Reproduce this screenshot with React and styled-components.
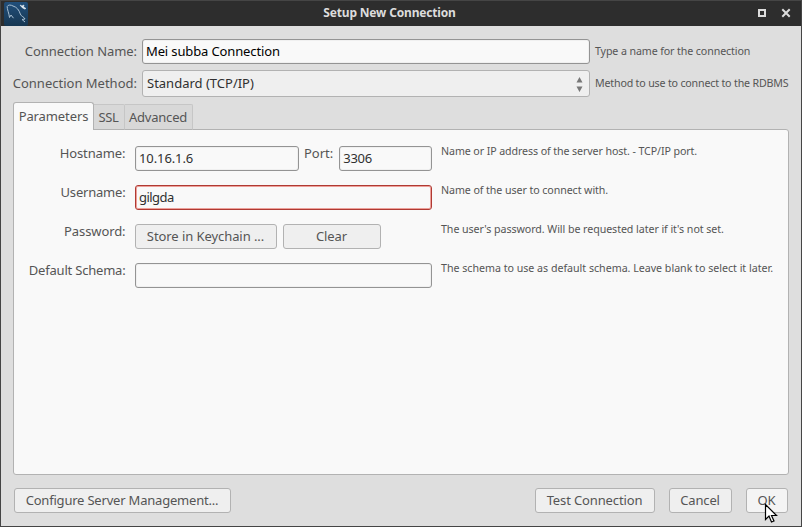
import React from "react";
import styled, { createGlobalStyle, css } from "styled-components";

const GlobalStyle = createGlobalStyle`
  * { box-sizing: border-box; }
  body { margin: 0; overflow: hidden; }
  button, input { font: inherit; }
`;

const Dialog = styled.div`
  display: flex;
  flex-direction: column;
  width: 802px;
  height: 527px;
  border: 1px solid #454545;
  background: #dedede;
  color: #555;
  font: 13px/18px "Noto Sans", "Open Sans", sans-serif;
  white-space: nowrap;
  cursor: default;
`;

const TitleBar = styled.header`
  display: grid;
  grid-template-columns: 60px 1fr 60px;
  align-items: center;
  height: 25px;
  flex: none;
  background: #2d2d2d;
  color: #dcdcdc;
`;

const AppIcon = styled.svg`
  display: block;
  margin-left: 3px;
`;

const Title = styled.h1`
  margin: 0 0 1px -24px;
  padding-left: 5px;
  width: 700px;
  font-size: 12px;
  line-height: 18px;
  font-weight: 700;
  text-align: center;
  letter-spacing: -0.17px;
`;

const WindowControls = styled.svg`
  display: block;
  justify-self: end;
  margin: 0 9px 1px 0;
`;

const ConnectionForm = styled.section`
  display: grid;
  grid-template-columns: 124px 448px 1fr;
  grid-template-rows: 25px 27px;
  row-gap: 6px;
  column-gap: 5px;
  padding: 13px 0 0 12px;
  flex: none;
`;

const Label = styled.label`
  justify-self: end;
  line-height: ${(p) => p.$line || 24}px;
  letter-spacing: ${(p) => p.$spacing || 0}px;
`;

const HelpText = styled.span`
  font-size: 10.67px;
  line-height: ${(p) => p.$line || 24}px;
  letter-spacing: ${(p) => p.$spacing || 0}px;
`;

const frame = css`
  border: 1px solid #b2b2b2;
  border-radius: 3px;
  background: #efefef;
`;

const TextField = styled.input`
  display: block;
  width: ${(p) => p.$width}px;
  height: 25px;
  padding: 0 0 1px 3px;
  border: 1px solid ${(p) => (p.$active ? "#b03a33" : "#949494")};
  border-radius: 3px;
  outline: none;
  background: #f9f9f9;
  color: ${(p) => p.$color || "#303030"};
  box-shadow: inset 0 0 0 1px ${(p) => (p.$active ? "#eda09a" : "#f0f0f0")};
  letter-spacing: ${(p) => p.$spacing || 0}px;
`;

const SelectField = styled.div`
  ${frame}
  display: flex;
  align-items: center;
  justify-content: space-between;
  padding: 0 6px 1px 4px;
  color: #303030;
`;

const Arrows = styled.svg`
  margin-top: 2px;
`;

const TabBar = styled.nav`
  display: flex;
  align-items: flex-end;
  height: 28px;
  margin: 5px 0 -1px 12px;
  flex: none;
`;

const Tab = styled.div`
  display: flex;
  justify-content: center;
  width: ${(p) => p.$width}px;
  height: ${(p) => (p.$selected ? 28 : 26)}px;
  padding-top: 4px;
  padding-right: ${(p) => (p.$selected ? 0 : 1)}px;
  border: 1px solid ${(p) => (p.$selected ? "#b2b2b2" : "#c6c6c6")};
  border-left-width: ${(p) => (p.$selected ? 1 : 0)}px;
  border-bottom: ${(p) => (p.$selected ? "0" : "1px solid #b2b2b2")};
  border-radius: ${(p) => (p.$selected ? "3px 3px 0 0" : "0 2px 0 0")};
  background: ${(p) => (p.$selected ? "#f9f9f9" : "#d8d8d8")};
  z-index: 1;
  letter-spacing: ${(p) => p.$spacing || 0}px;
`;

const TabText = styled.span`
  height: 18px;
  line-height: ${(p) => (p.$raised ? 18 : 17)}px;
`;

const Panel = styled.main`
  width: 776px;
  height: 346px;
  flex: none;
  margin-left: 12px;
  padding: 16px 0 0 14px;
  border: 1px solid #b2b2b2;
  border-radius: 0 3px 3px 3px;
  background: #f9f9f9;
`;

const FieldRow = styled.div`
  display: grid;
  grid-template-columns: 98px 297px 1fr;
  column-gap: 9px;
  height: 39px;

  ${Label} {
    height: 14px;
    line-height: 14px;
  }

  > ${Label} {
    padding-right: 0.5px;
  }

  ${HelpText} {
    line-height: 10px;
  }
`;

const Controls = styled.div`
  display: flex;
  align-items: flex-start;
  gap: ${(p) => p.$gap || 0}px;
`;

const PortGroup = styled.div`
  display: flex;
  gap: 6px;
`;

const Button = styled.button`
  ${frame}
  width: ${(p) => p.$width}px;
  height: 25px;
  padding: 0 1px 1px 0;
  background: ${(p) => (p.$hover ? "#f4f4f4" : "#efefef")};
  color: #555;
  letter-spacing: ${(p) => p.$spacing || 0}px;
`;

const Footer = styled.footer`
  display: flex;
  gap: 14px;
  padding: 13px 13px 0;
`;

const Spacer = styled.span`
  flex: 1;
`;

const OkSlot = styled.div`
  position: relative;
`;

const Pointer = styled.svg`
  position: absolute;
  left: 18px;
  top: 15px;
`;

const DolphinIcon = () => (
  <AppIcon width="24" height="24" viewBox="0 0 24 24">
    <defs>
      <linearGradient id="sea" x2="0" y2="1">
        <stop stopColor="#214f7b" />
        <stop offset="1" stopColor="#173752" />
      </linearGradient>
    </defs>
    <rect width="24" height="24" rx="2" fill="url(#sea)" />
    <path d="M5.5 15.5C5 11 3 7 3.2 4.5C4 2.5 7 2.8 9 4C13 5.2 15 8 16.3 12C17 14.5 20.5 15 21 17L18 17.5L21 20M5.5 15.5L7 13L9.5 16.2" fill="none" stroke="#a9bfd2" strokeWidth="1" />
    <path d="M16 3L18 4L20 3L19.5 5L22 6.5L20.5 7L18 5.5Z" fill="#e4edf4" stroke="#e4edf4" strokeWidth=".6" />
  </AppIcon>
);

export default function App() {
  return (
    <>
      <GlobalStyle />
      <Dialog>
        <TitleBar>
          <DolphinIcon />
          <Title>Setup New Connection</Title>
          <WindowControls width="34" height="10" viewBox="0 0 34 10" shapeRendering="crispEdges">
            <rect x="1" y="2" width="6" height="6" fill="none" stroke="#dcdcdc" strokeWidth="2" />
            <path d="M25 2L31 8M31 2L25 8" stroke="#dcdcdc" strokeWidth="2" strokeLinecap="square" shapeRendering="auto" />
          </WindowControls>
        </TitleBar>
        <ConnectionForm>
          <Label $spacing={-0.06}>Connection Name:</Label>
          <TextField $color="#000" $spacing={-0.13} defaultValue="Mei subba Connection" />
          <HelpText $spacing={-0.11}>Type a name for the connection</HelpText>
          <Label $line={26}>Connection Method:</Label>
          <SelectField>
            <span>Standard (TCP/IP)</span>
            <Arrows width="7" height="17" viewBox="0 0 7 17">
              <path d="M3.5 1L6.5 6.5H.5ZM3.5 16L6.5 10.5H.5Z" fill="#777" />
            </Arrows>
          </SelectField>
          <HelpText $line={26} $spacing={-0.18}>Method to use to connect to the RDBMS</HelpText>
        </ConnectionForm>
        <TabBar>
          <Tab $width={81} $selected $spacing={-0.1}><TabText $raised>Parameters</TabText></Tab>
          <Tab $width={31} $spacing={-0.3}><TabText>SSL</TabText></Tab>
          <Tab $width={68} $spacing={-0.2}><TabText>Advanced</TabText></Tab>
        </TabBar>
        <Panel>
          <FieldRow>
            <Label $spacing={-0.1}>Hostname:</Label>
            <Controls $gap={5}>
              <TextField $width={164} $spacing={-0.1} defaultValue="10.16.1.6" />
              <PortGroup>
                <Label>Port:</Label>
                <TextField $width={93} $spacing={-0.3} defaultValue="3306" />
              </PortGroup>
            </Controls>
            <HelpText $spacing={-0.1}>Name or IP address of the server host. - TCP/IP port.</HelpText>
          </FieldRow>
          <FieldRow>
            <Label $spacing={-0.2}>Username:</Label>
            <TextField $active $spacing={-0.55} defaultValue="gilgda" />
            <HelpText $spacing={-0.08}>Name of the user to connect with.</HelpText>
          </FieldRow>
          <FieldRow>
            <Label $spacing={-0.1}>Password:</Label>
            <Controls $gap={6}>
              <Button $width={142} $spacing={-0.07}>Store in Keychain ...</Button>
              <Button $width={98} $spacing={-0.1}>Clear</Button>
            </Controls>
            <HelpText $spacing={-0.065}>The user's password. Will be requested later if it's not set.</HelpText>
          </FieldRow>
          <FieldRow>
            <Label $spacing={-0.2}>Default Schema:</Label>
            <TextField />
            <HelpText $spacing={-0.015}>The schema to use as default schema. Leave blank to select it later.</HelpText>
          </FieldRow>
        </Panel>
        <Footer>
          <Button $width={217} $spacing={-0.2}>Configure Server Management...</Button>
          <Spacer />
          <Button $width={120} $spacing={-0.13}>Test Connection</Button>
          <Button $width={63} $spacing={-0.15}>Cancel</Button>
          <OkSlot>
            <Button $width={42} $hover>OK</Button>
            <Pointer width="14" height="21" viewBox="0 0 14 21">
              <path d="M1.5 1.5V16.5L5 13L7.5 19L10 18L7.5 12.5H12.5Z" fill="#fff" stroke="#000" strokeWidth="1.2" />
            </Pointer>
          </OkSlot>
        </Footer>
      </Dialog>
    </>
  );
}
